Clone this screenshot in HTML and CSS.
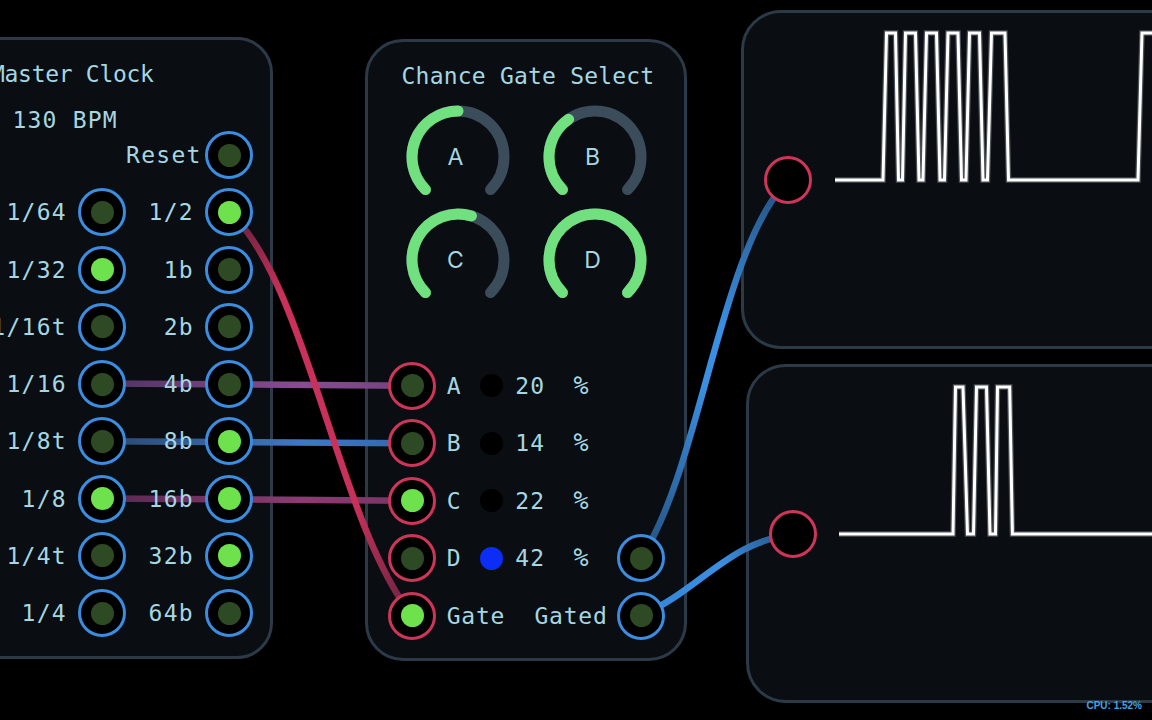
FILE: index.html
```html
<!DOCTYPE html>
<html>
<head>
<meta charset="utf-8">
<title>Patch</title>
<link rel="stylesheet" href="styles.css">
</head>
<body>
<div class="canvas">

  <section class="panel clock">
    <div class="content">
      <h2 class="title clock-title">Master Clock</h2>
      <div class="txt bpm">130 BPM</div>
      <div class="clock-grid">
        <span></span><span></span>
        <span class="txt lbl">Reset</span><span class="port"><i class="led"></i></span>

        <span class="txt lbl">1/64</span><span class="port"><i class="led"></i></span>
        <span class="txt lbl">1/2</span><span class="port"><i class="led on"></i></span>

        <span class="txt lbl">1/32</span><span class="port"><i class="led on"></i></span>
        <span class="txt lbl">1b</span><span class="port"><i class="led"></i></span>

        <span class="txt lbl">1/16t</span><span class="port"><i class="led"></i></span>
        <span class="txt lbl">2b</span><span class="port"><i class="led"></i></span>

        <span class="txt lbl">1/16</span><span class="port"><i class="led"></i></span>
        <span class="txt lbl">4b</span><span class="port"><i class="led"></i></span>

        <span class="txt lbl">1/8t</span><span class="port"><i class="led"></i></span>
        <span class="txt lbl">8b</span><span class="port"><i class="led on"></i></span>

        <span class="txt lbl">1/8</span><span class="port"><i class="led on"></i></span>
        <span class="txt lbl">16b</span><span class="port"><i class="led on"></i></span>

        <span class="txt lbl">1/4t</span><span class="port"><i class="led"></i></span>
        <span class="txt lbl">32b</span><span class="port"><i class="led on"></i></span>

        <span class="txt lbl">1/4</span><span class="port"><i class="led"></i></span>
        <span class="txt lbl">64b</span><span class="port"><i class="led"></i></span>
      </div>
    </div>
  </section>

  <section class="panel gate">
    <div class="content">
      <h2 class="title gate-title">Chance Gate Select</h2>
      <div class="knobs">
        <div class="knob">
          <svg viewBox="0 0 104 92" width="104" height="92">
            <path class="trk" d="M19.47 84.53 A46 46 0 1 1 84.53 84.53"/>
            <path class="val" d="M19.47 84.53 A46 46 0 0 1 52 6"/>
          </svg>
          <span class="klbl">A</span>
        </div>
        <div class="knob">
          <svg viewBox="0 0 104 92" width="104" height="92">
            <path class="trk" d="M19.47 84.53 A46 46 0 1 1 84.53 84.53"/>
            <path class="val" d="M19.47 84.53 A46 46 0 0 1 25.62 14.32"/>
          </svg>
          <span class="klbl">B</span>
        </div>
        <div class="knob">
          <svg viewBox="0 0 104 92" width="104" height="92">
            <path class="trk" d="M19.47 84.53 A46 46 0 1 1 84.53 84.53"/>
            <path class="val" d="M19.47 84.53 A46 46 0 0 1 65.45 8.01"/>
          </svg>
          <span class="klbl">C</span>
        </div>
        <div class="knob">
          <svg viewBox="0 0 104 92" width="104" height="92">
            <path class="trk" d="M19.47 84.53 A46 46 0 1 1 84.53 84.53"/>
            <path class="val" d="M19.47 84.53 A46 46 0 1 1 84.53 84.53"/>
          </svg>
          <span class="klbl">D</span>
        </div>
      </div>

      <div class="rows">
        <div class="row">
          <span class="port red"><i class="led"></i></span>
          <span class="txt rlbl">A</span>
          <i class="dot"></i>
          <span class="txt num">20</span>
          <span class="txt pct">%</span>
        </div>
        <div class="row">
          <span class="port red"><i class="led"></i></span>
          <span class="txt rlbl">B</span>
          <i class="dot"></i>
          <span class="txt num">14</span>
          <span class="txt pct">%</span>
        </div>
        <div class="row">
          <span class="port red"><i class="led on"></i></span>
          <span class="txt rlbl">C</span>
          <i class="dot"></i>
          <span class="txt num">22</span>
          <span class="txt pct">%</span>
        </div>
        <div class="row">
          <span class="port red"><i class="led"></i></span>
          <span class="txt rlbl">D</span>
          <i class="dot active"></i>
          <span class="txt num">42</span>
          <span class="txt pct">%</span>
          <span class="spacer"></span>
          <span class="port"><i class="led"></i></span>
        </div>
        <div class="row">
          <span class="port red"><i class="led on"></i></span>
          <span class="txt rlbl">Gate</span>
          <span class="spacer"></span>
          <span class="txt outlbl">Gated</span>
          <span class="port"><i class="led"></i></span>
        </div>
      </div>
    </div>
  </section>

  <section class="panel scope scope-top">
    <div class="content scope-body">
      <span class="port red empty"></span>
      <svg class="wave" viewBox="0 0 330 160" width="330" height="160">
        <path class="wave-under" d="M5 154 H53 L56.5 7 H65.5 L68.5 154 H72.5 L75.5 7 H85.5 L89 154 H93 L96.5 7 H106.5 L110 154 H114.5 L118 7 H128 L131.5 154 H136 L139.5 7 H149.5 L153 154 H157.5 L161.5 7 H175 L178.5 154 H308 L312 7 H340"/>
        <path class="wave-line" d="M5 154 H53 L56.5 7 H65.5 L68.5 154 H72.5 L75.5 7 H85.5 L89 154 H93 L96.5 7 H106.5 L110 154 H114.5 L118 7 H128 L131.5 154 H136 L139.5 7 H149.5 L153 154 H157.5 L161.5 7 H175 L178.5 154 H308 L312 7 H340"/>
      </svg>
    </div>
  </section>

  <section class="panel scope scope-bottom">
    <div class="content scope-body">
      <span class="port red empty"></span>
      <svg class="wave" viewBox="0 0 330 160" width="330" height="160">
        <path class="wave-under" d="M4 154 H118 L120.5 7 H128 L132.5 154 H138.5 L141.5 7 H151.5 L155 154 H160.5 L162.5 7 H174.7 L177.4 154 H340"/>
        <path class="wave-line" d="M4 154 H118 L120.5 7 H128 L132.5 154 H138.5 L141.5 7 H151.5 L155 154 H160.5 L162.5 7 H174.7 L177.4 154 H340"/>
      </svg>
    </div>
  </section>

  <svg class="cables" width="1152" height="720" viewBox="0 0 1152 720">
    <defs>
      <linearGradient id="gRed" gradientUnits="userSpaceOnUse" x1="229" y1="211" x2="412" y2="615">
        <stop offset="0" stop-color="#5e2139"/>
        <stop offset="0.22" stop-color="#c9315b"/>
        <stop offset="0.72" stop-color="#c9315b"/>
        <stop offset="1" stop-color="#6a2341"/>
      </linearGradient>
      <linearGradient id="gPurple" gradientUnits="userSpaceOnUse" x1="102" y1="0" x2="412" y2="0">
        <stop offset="0" stop-color="#4d3461"/>
        <stop offset="0.65" stop-color="#8a4c92"/>
        <stop offset="1" stop-color="#71427e"/>
      </linearGradient>
      <linearGradient id="gBlueH" gradientUnits="userSpaceOnUse" x1="102" y1="0" x2="412" y2="0">
        <stop offset="0" stop-color="#2a4870"/>
        <stop offset="0.65" stop-color="#3f78c6"/>
        <stop offset="1" stop-color="#3667a8"/>
      </linearGradient>
      <linearGradient id="gMag" gradientUnits="userSpaceOnUse" x1="102" y1="0" x2="412" y2="0">
        <stop offset="0" stop-color="#552a52"/>
        <stop offset="0.65" stop-color="#8e3b72"/>
        <stop offset="1" stop-color="#773465"/>
      </linearGradient>
      <linearGradient id="gBlue1" gradientUnits="userSpaceOnUse" x1="641" y1="558" x2="788" y2="180">
        <stop offset="0" stop-color="#24507f"/>
        <stop offset="0.45" stop-color="#3a8fe2"/>
        <stop offset="0.6" stop-color="#3a8fe2"/>
        <stop offset="1" stop-color="#24507f"/>
      </linearGradient>
      <linearGradient id="gBlue2" gradientUnits="userSpaceOnUse" x1="641" y1="615" x2="792" y2="534">
        <stop offset="0" stop-color="#3584d6"/>
        <stop offset="0.55" stop-color="#3a8fe2"/>
        <stop offset="1" stop-color="#24507f"/>
      </linearGradient>
    </defs>
    <path class="cable" stroke="url(#gPurple)" d="M102 383.5 L412 385.7"/>
    <path class="cable" stroke="url(#gBlueH)" d="M102 441.2 L412 443.2"/>
    <path class="cable" stroke="url(#gMag)" d="M102 498.5 L412 500.7"/>
    <path class="cable" stroke="url(#gRed)" d="M229 211 C308 285 337 520 412 615.7"/>
    <path class="cable" stroke="url(#gBlue1)" d="M641 558 C700 470 720 250 788 180"/>
    <path class="cable" stroke="url(#gBlue2)" d="M641 615.7 C700 590 730 540 793 535"/>
  </svg>

  <div class="cpu">CPU: 1.52%</div>
</div>
</body>
</html>
```

FILE: styles.css
```css
* {
  box-sizing: border-box;
  margin: 0;
  padding: 0;
}

html, body {
  width: 1152px;
  height: 720px;
  overflow: hidden;
  background: #000;
}

body {
  font-family: "DejaVu Sans Mono", "Liberation Mono", monospace;
  color: #a5d6e1;
}

.canvas {
  position: relative;
  width: 1152px;
  height: 720px;
  overflow: hidden;
}

/* ---------- panels ---------- */
.panel {
  position: absolute;
  background: #0a0e12;
  border: 3px solid #2c3a47;
}

.content {
  position: relative;
  z-index: 2;
}

.txt,
.title {
  font-size: 23px;
  line-height: 24px;
  letter-spacing: 0.75px;
  font-weight: normal;
  white-space: nowrap;
}

.title {
  letter-spacing: 0.2px;
}

/* ---------- ports ---------- */
.port {
  flex: none;
  width: 48px;
  height: 48px;
  border-radius: 50%;
  border: 3px solid #3a8de0;
  background: #000;
  display: grid;
  place-items: center;
}

.port.red {
  border-color: #cf3559;
}

.led {
  display: block;
  width: 23px;
  height: 23px;
  border-radius: 50%;
  background: #2d4a24;
}

.led.on {
  background: #6ee24c;
}

/* ---------- master clock ---------- */
.clock {
  left: -60px;
  top: 37px;
  width: 333px;
  height: 622px;
  border-radius: 36px;
  padding: 22px 17px 0 0;
}

.clock-title {
  margin-left: 48px;
  letter-spacing: -0.3px;
}

.bpm {
  margin-top: 22px;
  margin-left: 69.5px;
  letter-spacing: 1.2px;
}

.clock-grid {
  margin-top: -1px;
  display: grid;
  grid-template-columns: 1fr 48px 79px 48px;
  grid-auto-rows: 48px;
  row-gap: 9.25px;
  align-items: center;
}

.lbl {
  text-align: right;
  padding-right: 11px;
  letter-spacing: 1.3px;
}

/* ---------- chance gate select ---------- */
.gate {
  left: 365px;
  top: 39px;
  width: 322px;
  height: 622px;
  border-radius: 38px;
  padding-top: 22px;
}

.gate-title {
  text-align: center;
  padding-left: 4px;
}

.knobs {
  margin-top: 17px;
  display: grid;
  grid-template-columns: 104px 104px;
  column-gap: 33px;
  row-gap: 11px;
  justify-content: center;
}

.knob {
  display: grid;
  width: 104px;
  height: 92px;
}

.knob svg,
.knob .klbl {
  grid-area: 1 / 1;
}

.knob svg {
  display: block;
}

.trk,
.val {
  fill: none;
  stroke-width: 11;
  stroke-linecap: round;
}

.trk {
  stroke: #3b4c5a;
}

.val {
  stroke: #71e07e;
}

.klbl {
  font-family: Inter, "Liberation Sans", sans-serif;
  font-size: 23px;
  line-height: 24px;
  text-align: center;
  align-self: start;
  margin-top: 40px;
  margin-right: 4px;
  color: #a5d6e1;
}

.rows {
  margin-top: 61.7px;
  display: flex;
  flex-direction: column;
  gap: 9.5px;
  padding: 0 19px 0 20px;
}

.row {
  display: flex;
  align-items: center;
  height: 48px;
}

.rlbl {
  margin-left: 10.7px;
}

.dot {
  display: block;
  flex: none;
  width: 23px;
  height: 23px;
  border-radius: 50%;
  background: #000;
  margin-left: 18.7px;
}

.dot.active {
  background: #0b2df5;
}

.num {
  margin-left: 12.3px;
  letter-spacing: 1.2px;
}

.pct {
  margin-left: 28px;
  font-size: 25px;
}

.spacer {
  flex: 1;
}

.outlbl {
  margin-right: 9.5px;
}

/* ---------- scopes ---------- */
.scope {
  width: 480px;
  height: 339px;
  border-radius: 40px;
  padding: 13px 0 0 20px;
}

.scope-top {
  left: 741px;
  top: 10px;
}

.scope-bottom {
  left: 746px;
  top: 364px;
}

.scope-body {
  display: flex;
  align-items: flex-start;
}

.scope-body .port {
  margin-top: 130px;
}

.wave {
  display: block;
  flex: none;
  margin-left: 18px;
  overflow: visible;
}

.wave-under,
.wave-line {
  fill: none;
  stroke-linejoin: miter;
  stroke-miterlimit: 3;
}

.wave-under {
  stroke: #4a5056;
  stroke-width: 5.5;
}

.wave-line {
  stroke: #ffffff;
  stroke-width: 3;
}

/* ---------- cables ---------- */
.cables {
  position: absolute;
  left: 0;
  top: 0;
  z-index: 1;
  pointer-events: none;
}

.cable {
  fill: none;
  stroke-width: 6.5;
  stroke-linecap: round;
}

/* ---------- status ---------- */
.cpu {
  position: absolute;
  right: 10px;
  top: 700px;
  z-index: 3;
  font-family: "Liberation Sans", Arial, sans-serif;
  font-size: 10px;
  line-height: 12px;
  font-weight: bold;
  color: #3ea4e4;
}
```
